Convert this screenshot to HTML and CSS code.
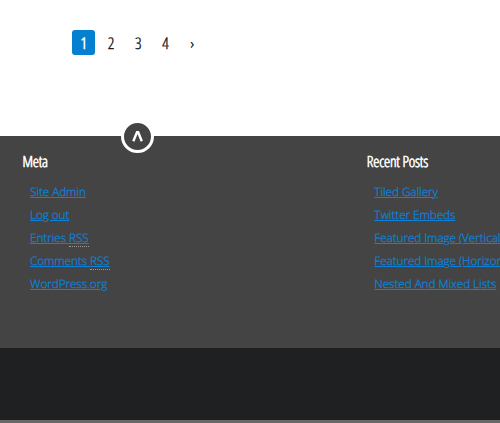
FILE: index.html
```html
<!DOCTYPE html>
<html lang="en">
<head>
<meta charset="utf-8">
<title>Blog</title>
<link rel="stylesheet" href="styles.css">
</head>
<body>
<nav class="pagination">
  <span class="page current">1</span>
  <a class="page">2</a>
  <a class="page">3</a>
  <a class="page">4</a>
  <a class="page next">›</a>
</nav>
<footer class="footer">
  <a class="to-top" aria-label="Back to top"><svg width="12" height="13" viewBox="0 0 12 13"><path d="M1.3 11.2 5 2.2h1.2l3.6 9" fill="none" stroke="#fff" stroke-width="2.4"/></svg></a>
  <section class="widget">
    <h3><span>Meta</span></h3>
    <ul>
      <li><a>Site Admin</a></li>
      <li><a>Log out</a></li>
      <li><a>Entries <abbr>RSS</abbr></a></li>
      <li><a>Comments <abbr>RSS</abbr></a></li>
      <li><a>WordPress.org</a></li>
    </ul>
  </section>
  <section class="widget">
    <h3><span>Recent Posts</span></h3>
    <ul>
      <li><a>Tiled Gallery</a></li>
      <li><a>Twitter Embeds</a></li>
      <li><a>Featured Image (Vertical)</a></li>
      <li><a>Featured Image (Horizontal)</a></li>
      <li><a>Nested And Mixed Lists</a></li>
    </ul>
  </section>
</footer>
<div class="bottom"></div>
</body>
</html>
```
FILE: styles.css
```css
* { box-sizing: border-box; }
body {
  margin: 0;
  height: 423px;
  overflow: hidden;
  background: #fff;
  font-family: "Open Sans", sans-serif;
  text-rendering: geometricPrecision;
}
.pagination {
  display: flex;
  gap: 4px;
  height: 136px;
  padding: 30px 0 0 72px;
}
.page {
  width: 23.3px;
  height: 25px;
  border-radius: 3px;
  text-align: center;
  font-size: 16px;
  line-height: 26px;
  font-weight: 300;
  font-stretch: 75%;
  -webkit-text-stroke: 0.35px currentColor;
  color: #111;
}
.current {
  background: #0480d0;
  color: #fff;
  -webkit-text-stroke-width: 0.6px;
}
.next { padding-right: 1px; }
.footer {
  position: relative;
  display: grid;
  grid-template-columns: 344.3px 133.2px;
  height: 212px;
  padding: 14px 0 0 22.5px;
  background: #444;
  overflow-x: clip;
}
.to-top {
  position: absolute;
  left: 121px;
  top: -16px;
  display: flex;
  align-items: center;
  justify-content: center;
  width: 33px;
  height: 33px;
  border: 3px solid #fff;
  border-radius: 50%;
  background: #444;
}
h3 {
  margin: 0;
  font-size: 15.5px;
  line-height: 23px;
  font-weight: 300;
  font-stretch: 75%;
  letter-spacing: -0.18px;
  -webkit-text-stroke: 0.55px currentColor;
  color: #fff;
}
ul {
  margin: 8px 0 0;
  padding: 0 0 0 7.5px;
  list-style: none;
}
li {
  height: 23px;
  font-size: 11.7px;
  line-height: 23px;
  font-weight: 300;
  letter-spacing: -0.04px;
  white-space: nowrap;
}
li a {
  color: #0d82d8;
  text-decoration: underline;
  -webkit-text-stroke: 0.3px currentColor;
}
abbr {
  display: inline-block;
  height: 17px;
  line-height: 17px;
  vertical-align: top;
  margin-top: 3px;
  text-decoration: underline;
  border-bottom: 1px dotted #999;
}
.bottom {
  height: 75px;
  background: #1f2021;
  border-bottom: 3px solid #686868;
}
```
